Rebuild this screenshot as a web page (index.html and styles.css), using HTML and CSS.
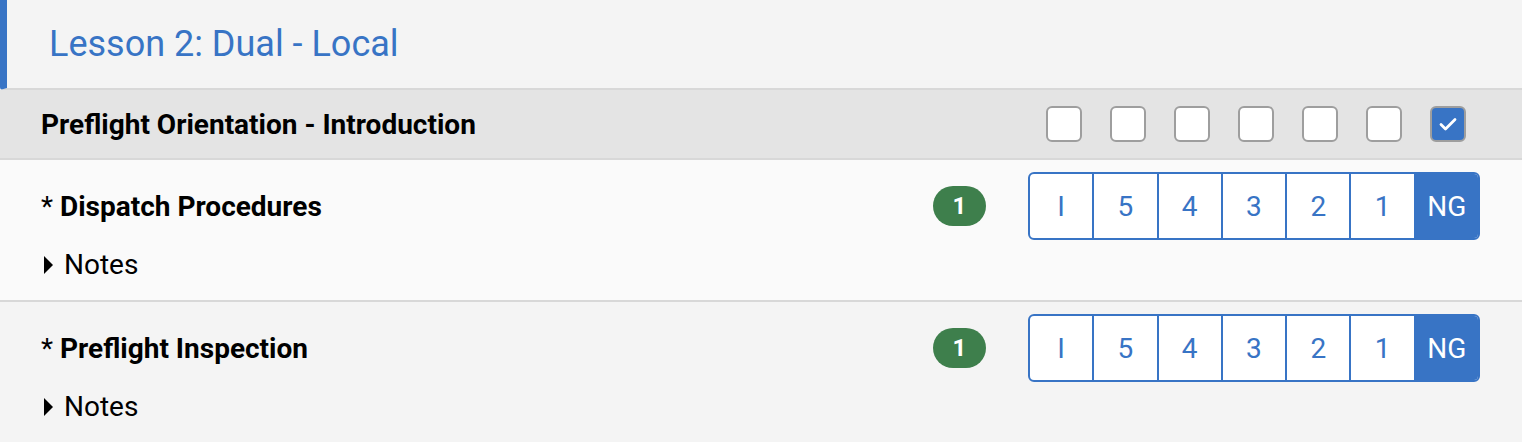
FILE: index.html
```html
<!DOCTYPE html>
<html lang="en">
<head>
    <meta charset="UTF-8">
    <title>Lesson 2</title>
    <link rel="stylesheet" href="styles.css">
</head>
<body>
    <div class="lesson">
        <div class="lesson-header">
            <h1>Lesson 2: Dual - Local</h1>
        </div>

        <div class="section-header">
            <h2>Preflight Orientation - Introduction</h2>
            <div class="checks">
                <span class="check"></span>
                <span class="check"></span>
                <span class="check"></span>
                <span class="check"></span>
                <span class="check"></span>
                <span class="check"></span>
                <span class="check checked">
                    <svg viewBox="0 0 24 24" width="24" height="24"><path d="M5 12.5l4.5 4.5L19 7.5" fill="none" stroke="#fff" stroke-width="2.8" stroke-linecap="round" stroke-linejoin="round"/></svg>
                </span>
            </div>
        </div>

        <div class="item">
            <div class="item-main">
                <div class="item-title">* <b>Dispatch Procedures</b></div>
                <span class="badge">1</span>
                <div class="grades">
                    <span class="grade">I</span>
                    <span class="grade">5</span>
                    <span class="grade">4</span>
                    <span class="grade">3</span>
                    <span class="grade">2</span>
                    <span class="grade">1</span>
                    <span class="grade active">NG</span>
                </div>
            </div>
            <div class="notes"><span class="caret"></span>Notes</div>
        </div>

        <div class="item alt">
            <div class="item-main">
                <div class="item-title">* <b>Preflight Inspection</b></div>
                <span class="badge">1</span>
                <div class="grades">
                    <span class="grade">I</span>
                    <span class="grade">5</span>
                    <span class="grade">4</span>
                    <span class="grade">3</span>
                    <span class="grade">2</span>
                    <span class="grade">1</span>
                    <span class="grade active">NG</span>
                </div>
            </div>
            <div class="notes"><span class="caret"></span>Notes</div>
        </div>
    </div>
</body>
</html>
```

FILE: styles.css
```css
body {
    margin: 0;
    font-family: 'Roboto', 'Liberation Sans', sans-serif;
    color: #000;
    background-color: #f4f4f4;
}

.lesson-header {
    height: 88px;
    border-left: 7px solid #3874c5;
    border-bottom-left-radius: 3px;
    border-bottom: 2px solid #d8d8d8;
    background-color: #f4f4f4;
    display: flex;
    align-items: center;
    padding-left: 42px;
}

h1 {
    margin: 0;
    font-size: 36px;
    font-weight: 400;
    color: #3874c5;
}

.section-header {
    height: 68px;
    background-color: #e4e4e4;
    border-bottom: 2px solid #d8d8d8;
    display: flex;
    align-items: center;
    justify-content: space-between;
    padding: 0 56px 0 41px;
}

h2 {
    margin: 0;
    font-size: 28px;
    font-weight: 700;
}

.checks {
    display: flex;
    gap: 28px;
}

.check {
    width: 32px;
    height: 32px;
    border: 2px solid #9e9e9e;
    border-radius: 6px;
    background-color: #fff;
    display: flex;
    align-items: center;
    justify-content: center;
}

.check.checked {
    background-color: #3874c5;
}

.item {
    background-color: #fafafa;
    height: 142px;
    border-bottom: 2px solid #d8d8d8;
    padding: 0 42px 0 41px;
    box-sizing: border-box;
}

.item.alt {
    background-color: #f4f4f4;
    border-bottom: none;
}

.item-main {
    display: flex;
    align-items: center;
    padding-top: 12px;
}

.item-title {
    flex: 1;
    font-size: 28px;
}

.badge {
    background-color: #3e7f4c;
    color: #fff;
    font-weight: 700;
    font-size: 24px;
    width: 53px;
    height: 40px;
    border-radius: 20px;
    display: flex;
    align-items: center;
    justify-content: center;
    margin-right: 42px;
}

.grades {
    display: flex;
    width: 452px;
    box-sizing: border-box;
    border: 2px solid #3874c5;
    border-radius: 6px;
    overflow: hidden;
    background-color: #fff;
}

.grade {
    flex: 1;
    height: 64px;
    display: flex;
    align-items: center;
    justify-content: center;
    font-size: 28px;
    color: #3874c5;
    border-left: 2px solid #3874c5;
}

.grade:first-child {
    border-left: none;
}

.grade.active {
    background-color: #3874c5;
    color: #fff;
}

.notes {
    display: flex;
    align-items: center;
    font-size: 28px;
    margin-top: 8px;
    padding-left: 3px;
}

.caret {
    width: 0;
    height: 0;
    border-top: 9px solid transparent;
    border-bottom: 9px solid transparent;
    border-left: 9px solid #000;
    margin-right: 11px;
}
```
